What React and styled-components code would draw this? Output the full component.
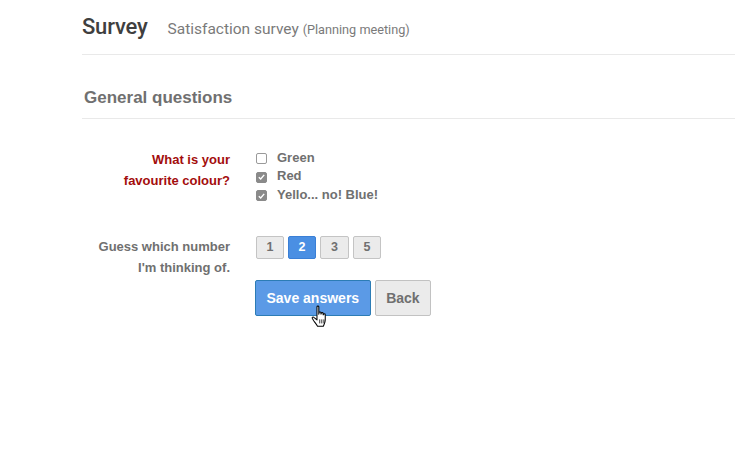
import React, { useState } from 'react';
import styled, { createGlobalStyle } from 'styled-components';

const GlobalStyle = createGlobalStyle`
  html, body {
    margin: 0;
    padding: 0;
    background: #fff;
  }
  body {
    font-family: "Liberation Sans", Arial, sans-serif;
  }
`;

const Page = styled.div`
  padding: 0 0 0 82px;
  width: 653px;
  height: 454px;
  position: relative;
  overflow: hidden;
`;

const Header = styled.div`
  display: flex;
  align-items: baseline;
  gap: 20px;
  height: 55px;
  box-sizing: border-box;
  padding-top: 14px;
  border-bottom: 1px solid #e9e9e9;
`;

const Title = styled.h1`
  margin: 0;
  font-family: Roboto, "Liberation Sans", sans-serif;
  font-weight: 500;
  font-size: 22px;
  color: #3f3f3f;
  letter-spacing: -0.2px;
`;

const Subtitle = styled.span`
  font-family: Roboto, "Liberation Sans", sans-serif;
  font-size: 15.5px;
  color: #7a7a7a;
`;

const Small = styled.small`
  font-size: 12.7px;
`;

const SectionTitle = styled.h2`
  margin: 0;
  height: 64px;
  box-sizing: border-box;
  padding: 33px 0 0 2px;
  font-size: 17px;
  font-weight: bold;
  color: #707070;
  border-bottom: 1px solid #e9e9e9;
`;

const Form = styled.div`
  padding-top: 30px;
  display: flex;
  flex-direction: column;
`;

const Row = styled.div`
  display: grid;
  grid-template-columns: 148px 1fr;
  column-gap: 26px;
  margin-bottom: ${p => p.$gap || 0}px;
`;

const Label = styled.div`
  text-align: right;
  font-size: 13px;
  font-weight: bold;
  line-height: 21px;
  color: ${p => (p.$error ? '#a30d0d' : '#707070')};
`;

const Options = styled.div`
  display: flex;
  flex-direction: column;
  margin-top: -1px;
`;

const Option = styled.label`
  display: flex;
  align-items: center;
  gap: 10px;
  height: 18.5px;
  line-height: 15px;
  font-size: 13px;
  font-weight: bold;
  color: #707070;
`;

const Box = styled.span`
  width: 11px;
  height: 11px;
  box-sizing: border-box;
  border-radius: 2px;
  margin-top: 3px;
  display: flex;
  align-items: center;
  justify-content: center;
  border: 1px solid ${p => (p.$checked ? '#8a8a8a' : '#9a9a9a')};
  background: ${p => (p.$checked ? '#8a8a8a' : '#fff')};
`;

const NumberGroup = styled.div`
  display: flex;
  gap: 4px;
`;

const NumberButton = styled.button`
  width: ${p => p.$w || 28}px;
  height: 23px;
  padding: 0;
  box-sizing: border-box;
  border-radius: 2px;
  font-family: "Liberation Sans", Arial, sans-serif;
  font-size: 12.5px;
  font-weight: bold;
  cursor: pointer;
  border: 1px solid ${p => (p.$active ? '#3a7fd6' : '#c4c4c4')};
  background: ${p => (p.$active ? '#4a8fe3' : '#ebebeb')};
  color: ${p => (p.$active ? '#fff' : '#707070')};
`;

const Actions = styled.div`
  display: flex;
  gap: 4px;
  margin-top: 21px;
  margin-left: -1px;
  position: relative;
`;

const ActionButton = styled.button`
  height: 36px;
  box-sizing: border-box;
  padding: 0 10.5px;
  border-radius: 2px;
  font-family: "Liberation Sans", Arial, sans-serif;
  font-size: 14px;
  font-weight: bold;
  cursor: pointer;
  border: 1px solid ${p => (p.$primary ? '#2c7cb5' : '#c2c2c2')};
  background: ${p => (p.$primary ? '#5b9ae6' : '#ebebeb')};
  color: ${p => (p.$primary ? '#fff' : '#707070')};
`;

const Cursor = styled.svg`
  position: absolute;
  left: 56px;
  top: 25px;
  width: 20px;
  height: 23px;
  pointer-events: none;
`;

const Check = () => (
  <svg width="7" height="6" viewBox="0 0 7 6">
    <path d="M0.8 3.2 L2.7 5 L6.2 0.9" fill="none" stroke="#fff" strokeWidth="1.4" />
  </svg>
);

const colours = [
  { name: 'Green', checked: false },
  { name: 'Red', checked: true },
  { name: 'Yello... no! Blue!', checked: true },
];

export default function App() {
  const [picked, setPicked] = useState(2);
  return (
    <Page>
      <GlobalStyle />
      <Header>
        <Title>Survey</Title>
        <Subtitle>
          Satisfaction survey <Small>(Planning meeting)</Small>
        </Subtitle>
      </Header>
      <SectionTitle>General questions</SectionTitle>
      <Form>
        <Row $gap={32}>
          <Label $error>
            What is your
            <br />
            favourite colour?
          </Label>
          <Options>
            {colours.map(c => (
              <Option key={c.name}>
                <Box $checked={c.checked}>{c.checked && <Check />}</Box>
                {c.name}
              </Option>
            ))}
          </Options>
        </Row>
        <Row>
          <Label>
            Guess which number
            <br />
            I'm thinking of.
          </Label>
          <div>
            <NumberGroup>
              {[1, 2, 3, 5].map(n => (
                <NumberButton key={n} $active={picked === n} $w={n === 3 ? 29 : 28} onClick={() => setPicked(n)}>
                  {n}
                </NumberButton>
              ))}
            </NumberGroup>
            <Actions>
              <ActionButton $primary>Save answers</ActionButton>
              <ActionButton>Back</ActionButton>
              <Cursor viewBox="0 0 17 20">
                <path
                  d="M5 1.5 C5 0.7 6.6 0.7 6.6 1.5 L6.6 8 L6.8 6.6 C6.8 5.8 8.4 5.8 8.4 6.6 L8.5 8 L8.7 7.2 C8.7 6.4 10.3 6.4 10.3 7.2 L10.4 8.6 L10.6 8.2 C10.6 7.4 12.2 7.4 12.2 8.2 L12.2 13 C12.2 15.5 11 17 10.5 18.5 L5.5 18.5 C4.8 17 3.5 15.5 2 13.5 L0.9 11.6 C0.5 10.8 1.6 10 2.3 10.7 L5 13 Z"
                  fill="#fff"
                  stroke="#000"
                  strokeWidth="0.9"
                  strokeLinejoin="round"
                />
                <path d="M7.4 12.5 V16 M9.2 12.5 V16 M11 12.5 V16" stroke="#000" strokeWidth="0.7" />
              </Cursor>
            </Actions>
          </div>
        </Row>
      </Form>
    </Page>
  );
}
